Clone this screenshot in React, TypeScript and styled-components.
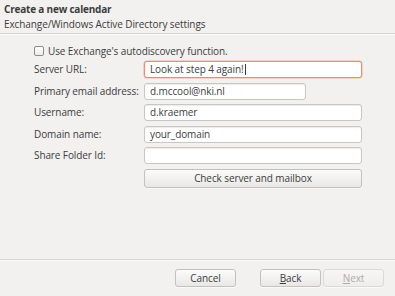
import * as React from 'react'
import styled, { createGlobalStyle, css } from 'styled-components'

const GlobalStyle = createGlobalStyle`
    html, body {
        margin: 0;
        padding: 0;
        background: #f2f1f0;
    }
    body {
        font-family: 'Open Sans', 'DejaVu Sans', sans-serif;
        font-size: 10px;
        letter-spacing: -0.1px;
        color: #3c3c3c;
    }
`

const Dialog = styled.div`
    width: 395px;
    height: 296px;
    display: flex;
    flex-direction: column;
    background: #f2f1f0;
    overflow: hidden;
`

const Header = styled.div`
    height: 34px;
    padding: 2px 4px 0 4px;
    box-sizing: border-box;
    border-bottom: 1px solid #d6d4d0;
    box-shadow: 0 1px 0 #fbfbfa;
`

const Title = styled.div`
    font-weight: 700;
    line-height: 15px;
    letter-spacing: -0.2px;
`

const Subtitle = styled.div`
    line-height: 14px;
`

const Body = styled.div`
    flex: 1;
    padding: 10px 0 0 34px;
`

const CheckRow = styled.label`
    display: flex;
    align-items: center;
    gap: 4px;
    height: 14px;
    margin-bottom: 3px;
`

const CheckBox = styled.span`
    width: 8px;
    height: 8px;
    border: 1px solid #8e8c87;
    border-radius: 2px;
    background: linear-gradient(#ffffff, #ecebe9);
`

const Form = styled.div`
    display: grid;
    grid-template-columns: 110px 218px;
    row-gap: 4.5px;
    align-items: center;
`

const Label = styled.span`
    line-height: 17px;
    white-space: nowrap;
`

const Field = styled.div<{ $focused?: boolean; $width?: number }>`
    height: 17px;
    width: ${p => (p.$width ? `${p.$width}px` : 'auto')};
    box-sizing: border-box;
    padding: 0 5px;
    background: #ffffff;
    border: 1px solid #c9c7c3;
    border-radius: 3px;
    box-shadow: inset 0 1px 1px rgba(0, 0, 0, 0.08);
    line-height: 15px;
    white-space: nowrap;
    ${p =>
        p.$focused &&
        css`
            border-color: #ef8d66;
            box-shadow: 0 0 0 0.5px #f4b49b;
        `}
`

const Caret = styled.span`
    display: inline-block;
    width: 1px;
    height: 11px;
    margin-left: 1px;
    vertical-align: -2px;
    background: #3c3c3c;
`

const Button = styled.div<{ $disabled?: boolean; $width?: number }>`
    height: 18px;
    width: ${p => (p.$width ? `${p.$width}px` : 'auto')};
    box-sizing: border-box;
    display: flex;
    align-items: center;
    justify-content: center;
    border: 1px solid #c3c1bc;
    border-radius: 3px;
    background: linear-gradient(#fbfbfa, #e9e8e6);
    box-shadow: 0 1px 0 rgba(255, 255, 255, 0.6);
    color: ${p => (p.$disabled ? '#aeaca7' : '#3c3c3c')};
    ${p =>
        p.$disabled &&
        css`
            border-color: #dcdad6;
            background: linear-gradient(#f7f6f5, #efeeec);
        `}
`

const WideButton = styled(Button)`
    height: 19px;
`

const Footer = styled.div`
    height: 37px;
    box-sizing: border-box;
    border-top: 1px solid #d6d4d0;
    box-shadow: inset 0 1px 0 #fbfbfa;
    display: flex;
    align-items: flex-start;
    padding: 9px 11px 0 0;
    justify-content: flex-end;
`

const Gap = styled.div<{ $size: number }>`
    width: ${p => p.$size}px;
`

const Mnemonic = styled.span`
    text-decoration: underline;
    text-underline-offset: 1px;
`

const App: React.FunctionComponent = () => {
    return (
        <Dialog>
            <GlobalStyle />
            <Header>
                <Title>Create a new calendar</Title>
                <Subtitle>Exchange/Windows Active Directory settings</Subtitle>
            </Header>
            <Body>
                <CheckRow>
                    <CheckBox />
                    <span>Use Exchange's autodiscovery function.</span>
                </CheckRow>
                <Form>
                    <Label>Server URL:</Label>
                    <Field $focused>
                        Look at step 4 again!
                        <Caret />
                    </Field>
                    <Label>Primary email address:</Label>
                    <Field $width={162}>d.mccool@nki.nl</Field>
                    <Label>Username:</Label>
                    <Field>d.kraemer</Field>
                    <Label>Domain name:</Label>
                    <Field>your_domain</Field>
                    <Label>Share Folder Id:</Label>
                    <Field />
                    <span />
                    <WideButton>Check server and mailbox</WideButton>
                </Form>
            </Body>
            <Footer>
                <Button $width={61}>Cancel</Button>
                <Gap $size={24} />
                <Button $width={61}>
                    <Mnemonic>B</Mnemonic>ack
                </Button>
                <Gap $size={2} />
                <Button $width={61} $disabled>
                    <Mnemonic>N</Mnemonic>ext
                </Button>
            </Footer>
        </Dialog>
    )
}

export default App
